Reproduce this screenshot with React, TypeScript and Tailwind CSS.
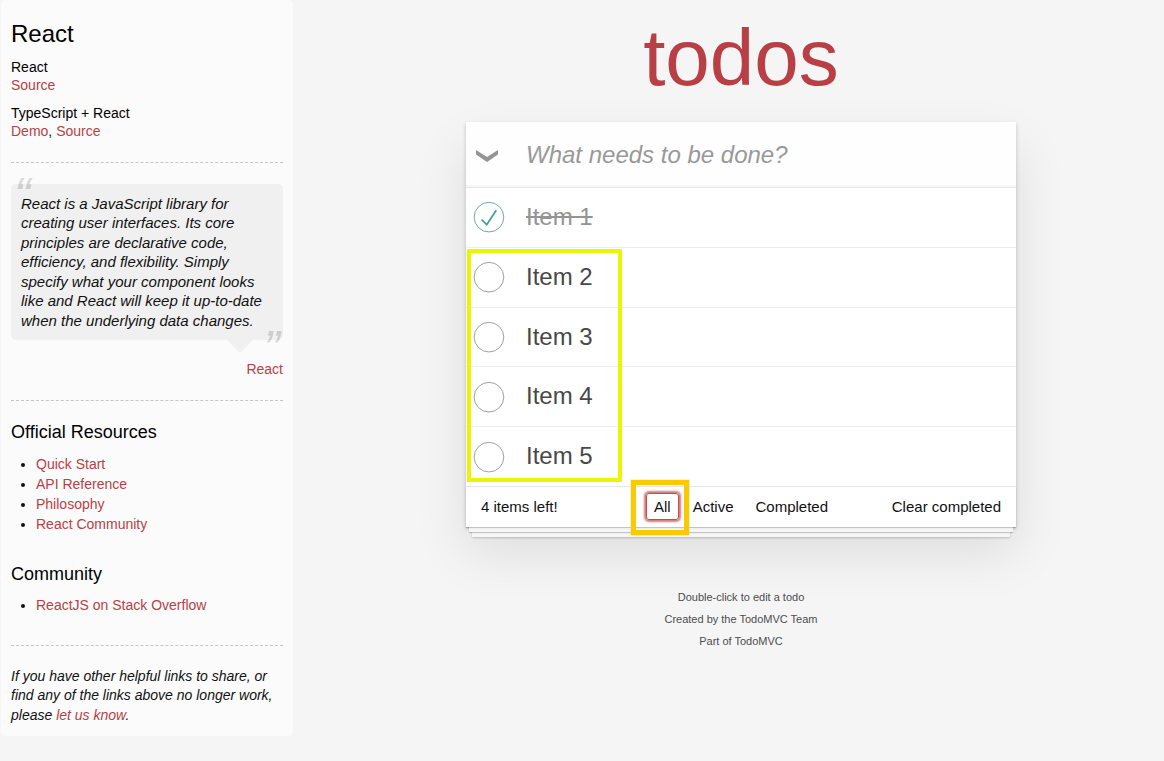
import React from "react";

const items = [
  { title: "Item 1", done: true },
  { title: "Item 2", done: false },
  { title: "Item 3", done: false },
  { title: "Item 4", done: false },
  { title: "Item 5", done: false },
];

function Link({ children }: { children: React.ReactNode }) {
  return <a className="cursor-pointer text-[#b83f45]">{children}</a>;
}

function Divider() {
  return <hr className="my-5 border-0 border-t border-dashed border-[#c5c5c5]" />;
}

function LinkList({ title, links }: { title: string; links: string[] }) {
  return (
    <>
      <h4 className="mb-2.5 text-[18px] leading-[21.6px] text-black">{title}</h4>
      <ul className="mb-[30px] list-disc pl-[25px] leading-5">
        {links.map((l) => (
          <li key={l}>
            <Link>{l}</Link>
          </li>
        ))}
      </ul>
    </>
  );
}

function Sidebar() {
  return (
    <aside className="ml-px h-[736px] w-[292px] shrink-0 rounded-[5px] bg-[#fbfbfb] px-2.5 pt-5 text-[14px] leading-[19.6px] text-[#111]">
      <h3 className="mb-2.5 text-[24px] leading-[28.8px] text-black">React</h3>
      <h5 className="leading-[16.8px] text-black">React</h5>
      <p>
        <Link>Source</Link>
      </p>
      <h5 className="mt-2.5 leading-[16.8px] text-black">TypeScript + React</h5>
      <p>
        <Link>Demo</Link>, <Link>Source</Link>
      </p>
      <Divider />
      <blockquote className="mt-[21px]">
        <div className="relative rounded-[5px] bg-[#f0f0f0] p-2.5 text-[15px] leading-[19.5px] italic">
          <span className="absolute top-[-20px] left-[3px] text-[50px] leading-[65px] opacity-15">“</span>
          <p>
            React is a JavaScript library for creating user interfaces. Its core principles are declarative
            code, efficiency, and flexibility. Simply specify what your component looks like and React will
            keep it up-to-date when the underlying data changes.
          </p>
          <span className="absolute right-[3px] bottom-[-42px] text-[50px] leading-[65px] opacity-15">”</span>
          <span className="absolute right-[30px] bottom-[-13px] border-x-[13px] border-t-[13px] border-x-transparent border-t-[#f0f0f0]" />
        </div>
        <footer className="mt-5 text-right">
          <Link>React</Link>
        </footer>
      </blockquote>
      <Divider />
      <div className="pt-[1.4px]">
        <LinkList
          title="Official Resources"
          links={["Quick Start", "API Reference", "Philosophy", "React Community"]}
        />
        <LinkList title="Community" links={["ReactJS on Stack Overflow"]} />
      </div>
      <Divider />
      <p className="pt-[0.5px] italic">
        If you have other helpful links to share, or find any of the links above no longer work, please{" "}
        <Link>let us know</Link>.
      </p>
    </aside>
  );
}

function Toggle({ done }: { done: boolean }) {
  return (
    <svg className="h-10 w-10 shrink-0" viewBox="-10 -18 100 135">
      <circle cx="50" cy="50" r="50" fill="none" stroke={done ? "#59A193" : "#949494"} strokeWidth="3" />
      {done && <path fill="#3EA390" d="M72 25L42 71 27 56l-4 4 20 20 34-52z" />}
    </svg>
  );
}

function TodoCard() {
  return (
    <section className="relative bg-white shadow-[0_2px_4px_0_rgba(0,0,0,0.2),0_25px_50px_0_rgba(0,0,0,0.1)]">
      <header className="flex h-[65px] items-center bg-[#fefefe] text-[24px] leading-[28px] shadow-[inset_0_-2px_1px_rgba(0,0,0,0.03)]">
        <svg className="mt-[3px] ml-2.5 h-3 w-[22px] shrink-0" viewBox="0 0 22 12">
          <path d="M0 0L11 7L22 0V4.4L11 11.9L0 4.4Z" fill="#949494" />
        </svg>
        <span className="ml-7 text-[#999] italic">What needs to be done?</span>
      </header>
      <ul className="border-t border-[#e6e6e6]">
        {items.map((item) => (
          <li
            key={item.title}
            className="flex items-center border-b border-[#ededed] text-[24px] leading-[28.8px] last:border-b-0"
          >
            <Toggle done={item.done} />
            <span
              className={
                item.done
                  ? "py-[15px] pl-5 text-[#949494] line-through"
                  : "py-[15px] pl-5 text-[#484848]"
              }
            >
              {item.title}
            </span>
          </li>
        ))}
      </ul>
      <footer className="grid h-[41px] grid-cols-[1fr_auto_1fr] items-center border-t border-[#e6e6e6] bg-white px-[15px] text-[15px] leading-[19px] text-[#111] shadow-[0_1px_1px_rgba(0,0,0,0.2),0_8px_0_-3px_#f6f6f6,0_9px_1px_-3px_rgba(0,0,0,0.2),0_16px_0_-6px_#f6f6f6,0_17px_2px_-6px_rgba(0,0,0,0.2)]">
        <span>4 items left!</span>
        <div className="flex">
          <a className="m-[3px] rounded-[3px] border border-[#ce4646] px-[7px] py-[3px] shadow-[0_0_2px_2px_#cf7d7d]">
            All
          </a>
          <a className="m-[3px] border border-transparent px-[7px] py-[3px]">Active</a>
          <a className="m-[3px] border border-transparent px-[7px] py-[3px]">Completed</a>
        </div>
        <span className="text-right">Clear completed</span>
      </footer>
      <div className="absolute top-[127px] left-px h-[233px] w-[155px] border-4 border-[#ebf500]" />
      <div className="absolute top-[358px] left-[165px] h-[55px] w-[58px] border-[5px] border-[#f7cb00] shadow-[0_0_0_0.4px_#f7cb0080]" />
    </section>
  );
}

export default function App() {
  return (
    <div
      className="flex h-[761px] w-full items-start overflow-hidden bg-[#f5f5f5]"
      style={{ fontFamily: '"Liberation Sans", Arial, sans-serif' }}
    >
      <Sidebar />
      <main className="ml-[173px] w-[550px] shrink-0">
        <h1 className="h-[122px] pt-[12px] text-center text-[80px] leading-[92px] text-[#b83f45]">todos</h1>
        <TodoCard />
        <footer className="mt-[59px] text-center text-[11px] leading-[22px] text-[#4d4d4d]">
          <p>Double-click to edit a todo</p>
          <p>Created by the TodoMVC Team</p>
          <p>Part of TodoMVC</p>
        </footer>
      </main>
    </div>
  );
}
